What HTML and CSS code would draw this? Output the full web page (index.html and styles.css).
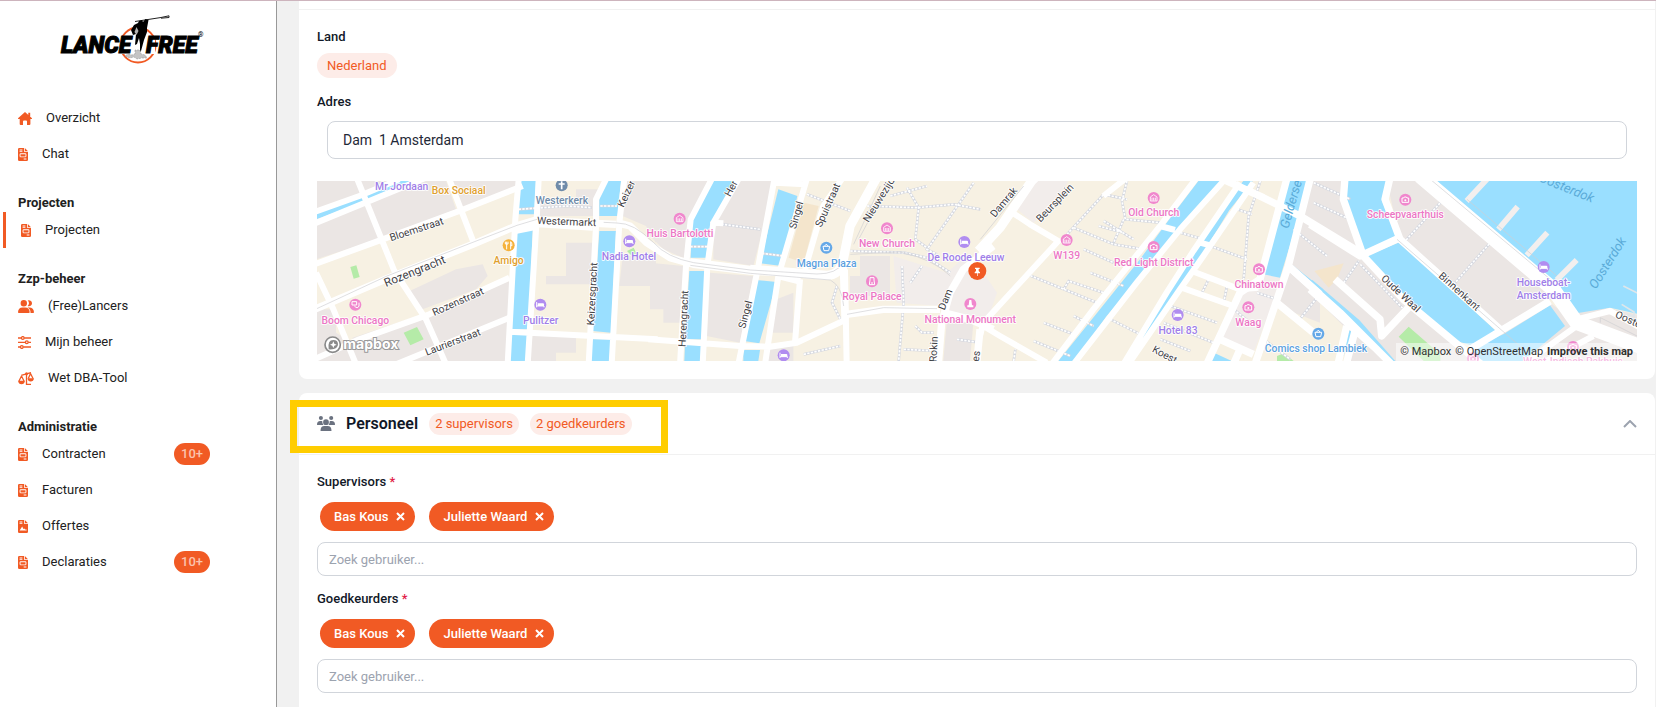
FILE: index.html
```html
<!DOCTYPE html>
<html lang="nl">
<head>
<meta charset="utf-8">
<meta name="viewport" content="width=device-width, initial-scale=1">
<title>Lance Free - Projecten</title>
<link rel="stylesheet" href="styles.css">
</head>
<body>
<svg class="defs" aria-hidden="true">
  <symbol id="doc" viewBox="0 0 10 13"><path fill="currentColor" fill-rule="evenodd" d="M1.300 0H6v3.200q0 .8.800.8H10v7.700q0 1.300-1.300 1.300H1.300Q0 13 0 11.700V1.300Q0 0 1.300 0ZM6.800 0 10 3.200H6.800ZM1.600 1.600v.8h2.800v-.8ZM1.600 3.300v.8h2.800v-.8ZM2.800 5.300q-1.200 0-1.200 1.200v1.600q0 1.200 1.200 1.200h4.400q1.200 0 1.200-1.200V6.500q0-1.200-1.200-1.200ZM2.500 6.200h5v2.200h-5ZM5.700 10.600v.8h2.700v-.8Z"/></symbol>
  <symbol id="sign" viewBox="0 0 10 13"><path fill="currentColor" fill-rule="evenodd" d="M1.300 0H6v3.200q0 .8.800.8H10v7.700q0 1.300-1.300 1.300H1.300Q0 13 0 11.700V1.300Q0 0 1.300 0ZM6.800 0 10 3.200H6.800ZM1.600 1.600v.8h2.800v-.8ZM1.600 3.300v.8h2.800v-.8ZM1.600 10.600 4.200 6.500l1.200 2.600 1-.6.700 1h1.500v1.100Z"/></symbol>
  <symbol id="home" viewBox="0 0 14 13"><path fill="currentColor" d="M7 0 14 6.200q.1.900-.7.900h-.9V12q0 1-1 1H9V9.400q0-1-1-1H6q-1 0-1 1V13H2.700q-1 0-1-1V7.100H.7Q-.1 7.100 0 6.200L5.900.9ZM10.300.8h1.900V5l-1.900-1.600Z"/></symbol>
  <symbol id="users" viewBox="0 0 16 13"><path fill="currentColor" d="M5.800 0a3.200 3.200 0 1 1 0 6.400 3.200 3.200 0 0 1 0-6.400ZM9.700 5.900a3.900 3.900 0 0 0 0-5.400 3 3 0 1 1 0 5.400ZM0 12.200Q.2 7.500 4.600 7.500h2.600q4.300 0 4.500 4.700 0 .8-.8.800H.8Q0 13 0 12.200ZM9.400 7.500h1.700q4.700.1 4.900 4.700 0 .8-.8.800h-2.700Q12.800 9 9.400 7.500Z"/></symbol>
  <symbol id="sliders" viewBox="0 0 13 13"><g fill="none" stroke="currentColor" stroke-width="1.300"><path d="M0 2h3.300M6.300 2H13M0 6.300h7.300M10.300 6.300H13M0 11h2.300M5.300 11H13"/><circle cx="4.800" cy="2" r="1.400"/><circle cx="8.800" cy="6.300" r="1.400"/><circle cx="3.800" cy="11" r="1.400"/></g></symbol>
  <symbol id="scales" viewBox="0 0 16 13"><path fill="none" stroke="currentColor" stroke-width="1.300" d="M3.200 3.400 8.500 1.800 13 .6M8.500 1.800V12.300H13M3.500 4 1 9M3.500 4 6 9M12.500 1.500 10.300 6.500M12.500 1.500 15 6.500"/><circle cx="8.500" cy="1.700" r="1.500" fill="currentColor"/><path fill="currentColor" d="M0 8.700h7Q6.400 12.200 3.500 12.200T0 8.700ZM9.500 6.200H16q-.5 3.200-3.300 3.200T9.500 6.200Z"/></symbol>
  <symbol id="team" viewBox="0 0 18 15"><path fill="currentColor" d="M3.900 0a2 2 0 1 1 0 4.100 2 2 0 0 1 0-4.100ZM14.200 0a2 2 0 1 1 0 4.100 2 2 0 0 1 0-4.100ZM9 3.300a2.900 2.900 0 1 1 0 5.800 2.900 2.900 0 0 1 0-5.800ZM0 8.700Q0 5 3.200 5h1.500l.6.200q-.2 2.300 1.100 3.700H.2ZM18 8.700Q18 5 14.800 5h-1.500l-.6.200q.2 2.300-1.100 3.700h6.200ZM3.500 14.400Q3.700 10 7.300 10h3.400q3.600 0 3.800 4.400 0 .6-.6.600H4.100q-.6 0-.6-.6Z"/></symbol>
  <symbol id="poi-bed" viewBox="-20 -20 40 40"><circle r="18" fill="#b18df0"/><path fill="none" stroke="#fff" stroke-width="3" d="M-11-8V8M-11 4H11V8"/><path fill="#fff" d="M-8-4H8q3 0 3 3V4H-8Z"/></symbol>
  <symbol id="poi-camera" viewBox="-20 -20 40 40"><circle r="18" fill="#f087cd"/><path fill="none" stroke="#fff" stroke-width="3" d="M-10-5h5l2-3h6l2 3h5V8h-20Z"/><circle cy="2" r="3" fill="#fff"/></symbol>
  <symbol id="poi-museum" viewBox="-20 -20 40 40"><circle r="18" fill="#f087cd"/><path fill="none" stroke="#fff" stroke-width="2.500" d="M-10-3 0-10 10-3V9h-20ZM-5-1V8M0-1V8M5-1V8"/></symbol>
  <symbol id="poi-shop" viewBox="-20 -20 40 40"><circle r="18" fill="#64a8e8"/><path fill="none" stroke="#fff" stroke-width="3" d="M-10-4h20L7 9H-7ZM-5-5l3-4h4l3 4"/></symbol>
</svg>

<div class="app">
  <aside class="sidebar">
    <a class="logo" href="#" aria-label="Lance Free">
      <svg viewBox="0 0 144 52" width="144" height="52">
        <circle cx="77" cy="32" r="17.500" fill="none" stroke="#f15a24" stroke-width="2"/>
        <path fill="#fff" d="M50 23H94V41H50Z"/>
        <text class="logo-text" x="0" y="40">LANCE</text>
        <text class="logo-text" x="85" y="40">FREE</text>
        <text class="logo-mark" x="137" y="24">®</text>
        <path d="M74 8.500 100 4.500M100 4.500l8-1.700v1.700l-8 .7" fill="none" stroke="#222" stroke-width="1"/>
        <path d="M87.500 7 86 15l0 4-3 8-3 11-1 1 0-8-1-6-2 6-2 1 1-11-3 1-2-5 3-5 4-2 1-2 3-1 1 2 2.500-3Z"/>
        <path d="M75.500 14l-2 5 2 3 2-4Z" fill="#fff" opacity=".7"/>
        <path d="M74 37v4l-3 1-4-1-3 2 5 2 4-1 3 2 5-1 5 0-2-3-4-1-1-4Z" fill="#c4c4c4" stroke="#8e8e8e" stroke-width=".5" stroke-dasharray="2 1"/>
      </svg>
    </a>
    <nav class="nav">
      <a class="item" href="#"><svg class="w14"><use href="#home"/></svg>Overzicht</a>
      <a class="item" href="#"><svg class="w10"><use href="#doc"/></svg>Chat</a>
      <h2 class="heading">Projecten</h2>
      <a class="item active" href="#"><svg class="w10"><use href="#doc"/></svg>Projecten</a>
      <h2 class="heading">Zzp-beheer</h2>
      <a class="item" href="#"><svg class="w16"><use href="#users"/></svg>(Free)Lancers</a>
      <a class="item" href="#"><svg class="w13"><use href="#sliders"/></svg>Mijn beheer</a>
      <a class="item" href="#"><svg class="w16"><use href="#scales"/></svg>Wet DBA-Tool</a>
      <h2 class="heading">Administratie</h2>
      <a class="item" href="#"><svg class="w10"><use href="#doc"/></svg>Contracten<span class="count">10+</span></a>
      <a class="item" href="#"><svg class="w10"><use href="#doc"/></svg>Facturen</a>
      <a class="item" href="#"><svg class="w10"><use href="#sign"/></svg>Offertes</a>
      <a class="item" href="#"><svg class="w10"><use href="#doc"/></svg>Declaraties<span class="count">10+</span></a>
    </nav>
  </aside>

  <main class="main">
    <section class="card location">
      <div class="location-body">
        <h3 class="label">Land</h3>
        <span class="pill country">Nederland</span>
        <label class="label" for="adres">Adres</label>
        <div class="address"><input id="adres" class="input" type="text" value="Dam  1 Amsterdam"></div>
        <div class="map">
          <svg class="map-canvas" viewBox="0 15 3960 540" preserveAspectRatio="xMidYMid slice" role="img" aria-label="Kaart van Amsterdam">
            <rect y="15" width="3960" height="540" fill="#f7f1e3"/>
            <g class="land">
              <g transform="translate(-3)"><path d="M0 15H600V30L440 95 410 15H390L420 100 200 185 0 250ZM110 485 320 415 580 315V555H110ZM270 350 420 280 500 265 515 300 480 340 320 400ZM0 400H60V470L110 500V555H0ZM750 200H830V325H690V300H750ZM650 470H780V530H720V555H640ZM920 240H1020V330H910ZM930 15H1020V200L990 150 920 120ZM670 75H780V40H850V120H670Z"/></g>
              <g transform="translate(999)"><path d="M0 15H180L120 130 110 250 40 220 0 180ZM0 260 100 270V440H40V400H0ZM250 15H375L310 270 190 250V140ZM180 290 310 300 270 500 170 480ZM380 370 430 350V470H350ZM350 510H430V555H350ZM630 240H720V360H600V300H630Z"/></g>
              <g transform="translate(2979)"><path d="M0 15H110L160 240 290 390 440 500 490 555H110V460L0 350ZM230 15H330L740 360 565 465 270 190ZM570 465 720 380 800 440 900 480 1000 500V555H540ZM800 410 890 395 1000 420V500L830 450Z"/></g>
              <path d="M2974 15H3009V440L2879 390 2909 270 2949 130ZM1889 440H1969L1959 555H1879Z"/>
            </g>
            <path fill="#f2edeb" d="M1729 240 1889 290 1959 230 2040 350 2009 440H1889L1869 390 1739 380ZM2139 15H2254L2209 90 2149 140 2089 90ZM2769 345 2839 290 2889 305 2869 380 2809 530 2709 490Z"/>
            <path fill="#f4e5cc" d="M1460 80 1505 90 1460 260 1415 245ZM2992 285 3080 262 3060 310 3035 335Z"/>
            <path fill="#b5eba8" d="M100 273 118 268 128 303 110 308ZM260 470 300 453 320 490 280 508ZM930 225 950 215 962 240 945 240ZM3245 482 3275 452 3370 535V555H3320ZM2880 540 2900 532 2930 555H2880Z"/>
            <g class="water">
              <g transform="translate(-3)"><path d="M0 105 140 50 240 15H295L150 75 0 130ZM610 15H660L655 115H608ZM602 165 650 160 638 460H586ZM583 475H636L630 555H582ZM862 15H915L905 120H850V60ZM850 165H900L885 470 830 465ZM828 490H885L880 555H825Z"/></g>
              <g transform="translate(999)"><path d="M190 15H262L182 140 168 245H122L125 130ZM118 285H168L158 490H105ZM105 505H155L152 555H103ZM385 40 442 60 395 270 330 262ZM318 312 380 318 328 502 282 495ZM280 522H330L325 555H280Z"/></g>
              <g transform="translate(1989)"><path d="M655 15H725L600 160 500 280 380 420 285 555H235L360 400 480 250 560 140ZM920 15H988L960 110 900 305 850 295 890 110 905 70ZM930 262 1030 340V365L925 285ZM705 532 755 555H690Z"/><path class="narrow" d="M812 5 740 95 660 225 580 345 490 475 435 565"/></g>
              <g transform="translate(2979)"><path d="M105 15H228L218 80 265 180 165 235 100 70ZM170 240 270 198 558 465 490 510 440 495 290 370ZM375 10H990V415L900 395 800 412 740 345ZM580 475 720 388 765 450 650 545 630 560H470L500 510ZM110 460 128 468 100 540 85 530Z"/><path class="narrow" d="M0 320 140 440 250 565"/></g>
            </g>
            <g transform="translate(2979)">
              <path id="piers" class="piers" d="M470 75 535 5M565 160 623 92M650 238 712 170M740 312 800 252"/>
              <use class="pier-tops" href="#piers"/>
              <path class="jetty" d="M940 330 1000 360M935 385 972 408V422L950 415"/>
            </g>
            <g class="walks">
              <path id="walks" d="M605 100 750 90 825 95M850 90H900M1180 140 1330 160M1120 212H1175M1335 232 1400 240M1470 55 1600 105M1650 90 1800 95 1910 85 1990 100M1770 35 1805 95 1795 190 1830 215M1970 20 1830 220 1860 235M1720 60 1830 30M1600 225 1760 230 1830 245 1900 290M1755 270 1760 380 1745 555M1815 270 1780 320M1560 330 1545 380 1575 440M1590 410 1740 395 1860 400M1760 520 1860 525M1795 450 1815 470 1850 470M1460 535 1570 510M1920 490 1990 500M2250 175 2360 55 2430 70M2430 15 2415 75 2425 130 2530 140M2270 155 2390 205 2480 220M2420 130 2390 200M2345 150 2420 170M2360 135 2450 190M2300 220 2390 260M2130 295 2340 380M2240 340 2255 315 2360 350M2320 290 2420 330M2180 440 2270 475M2150 495 2260 540M2270 420 2330 450M2090 555 2095 520M2370 425 2470 475M2590 170 2660 190M2680 210 2790 250M2760 100 2805 115M2830 15 2795 120 2780 310M2680 300 2655 350M2730 330 2720 380M2560 390 2700 440M2540 440 2690 500M2530 490 2620 525M2750 400 2800 440M2820 350 2880 370M2840 490 2920 550M2930 160 3030 240M2950 120 3050 180M2990 20 3100 70M2990 80 3110 135M2940 440 3000 365M3080 320 3125 255M3130 265 3260 400M3260 200 3370 80M3410 325 3520 200"/>
              <use class="dots" href="#walks"/>
            </g>
            <g class="roads">
              <g transform="translate(-3)">
                <path class="md" d="M-10 110 130 60 250 10M-10 145 160 75 330 5M-5 265 200 190 430 105 620 30M120 0 235 285 330 430 390 565M400 10 475 205M0 290 50 395 120 565M-5 550 130 490 340 415 580 305M240 565 580 425"/>
                <path class="lg" d="M-5 400 220 305 470 205 600 150 660 132 840 142 900 145M590 165 665 150"/>
                <path class="md" d="M608 10 598 130 575 565M668 10 662 130 635 565M870 10 840 70 840 150 818 565M925 10 910 140 887 565M580 467 1025 490M665 145 830 155"/>
              </g>
              <g transform="translate(999)">
                <path class="md" d="M190 0 122 130 108 270 90 565M265 10 190 140 172 270 158 565M375 0 325 270 265 565M375 20 465 25M470 10 385 300 345 565M575 10 520 90 465 280M-5 490 270 510 360 512 440 500 590 430M450 310 435 500M585 280 590 565M190 140 220 142"/>
                <path class="lg" d="M-100 140 -60 150 -10 200 60 245 130 265 300 285 480 295M120 258 310 282M390 300 450 315"/>
                <path class="xl" d="M300 280 530 298Q570 298 580 250L600 150 680 5"/>
                <path class="lg" d="M580 270 585 430M1030 210 940 280 900 350 875 440 865 565M880 410 960 430 1030 460M990 460 980 565M590 415 700 400 870 400"/>
              </g>
              <g transform="translate(1989)">
                <path class="xl" d="M-5 225 60 155 155 15 165 5"/>
                <path class="md" d="M90 105 150 145 235 195 10 440 0 480M10 450 60 480 200 560M440 5 370 60M650 5 540 150 340 400 215 565M735 10 600 160 470 320 280 565M540 150 585 162M780 20 640 225 560 350 430 565M820 20 670 240 600 340 445 565M660 200 690 208M635 285 780 340 835 335M605 335 760 390"/>
                <path class="lg" d="M730 10 850 65 960 120 1150 235M920 10 840 310 780 350 680 565M990 10 925 270 825 565M925 270 1020 355M720 490 820 535M890 380 1000 470M780 520 760 565"/>
              </g>
              <g transform="translate(2979)">
                <path class="lg" d="M105 5 100 70 160 240 280 370 520 570M240 5 225 70 270 190 570 460M0 145 150 240 270 185M480 520 720 375M-60 275 90 410 245 565M0 340 200 520 245 565M75 310 210 430 215 480 300 390M110 450 85 560M135 465 110 560"/>
                <path class="xxl" d="M330 0 730 340 800 440 1000 515"/>
                <path class="md" d="M800 430 900 405 1000 460M800 450 640 565M690 565 850 480"/>
              </g>
            </g>
            <g class="tram"><path d="M-5 400 210 300 470 198 600 148 660 130M860 139 900 141Q950 140 1010 200 1050 245 1130 260L1300 282 1500 294Q1560 294 1578 260M1120 268 1300 292 1540 312Q1575 330 1580 390M1600 235 1750 228Q1850 250 1900 300M1610 205 1690 30M1625 190 1700 50M1590 415 1700 395 1860 398M1990 190 2120 30M3340 10 3700 310M3450 70 3720 300M3240 190 3620 520M3850 440V425L3980 490"/></g>

            <g class="streets">
              <text transform="translate(299 162) rotate(-18)">Bloemstraat</text>
              <text class="big" transform="translate(294 288) rotate(-22)">Rozengracht</text>
              <text transform="translate(424 379) rotate(-24)">Rozenstraat</text>
              <text transform="translate(408 500) rotate(-21)">Laurierstraat</text>
              <text transform="translate(749 139) rotate(2)">Westermarkt</text>
              <text transform="translate(930 54) rotate(-65)">Keizer</text>
              <text transform="translate(828 354) rotate(-87)">Keizersgracht</text>
              <text transform="translate(1244 38) rotate(-62)">Her</text>
              <text transform="translate(1102 428) rotate(-87)">Herengracht</text>
              <text transform="translate(1440 118) rotate(-74)">Singel</text>
              <text transform="translate(1287 416) rotate(-75)">Singel</text>
              <text transform="translate(1534 88) rotate(-66)">Spuistraat</text>
              <text transform="translate(1692 66) rotate(-58)">Nieuwezijds</text>
              <text transform="translate(1887 371) rotate(-68)">Dam</text>
              <text transform="translate(1852 520) rotate(-87)">Rokin</text>
              <text transform="translate(1979 541) rotate(-83)">es</text>
              <text transform="translate(2062 80) rotate(-50)">Damrak</text>
              <text transform="translate(2215 82) rotate(-46)">Beursplein</text>
              <text transform="translate(2542 538) rotate(28)">Koest</text>
              <text transform="translate(3250 354) rotate(43)">Oude Waal</text>
              <text transform="translate(3426 348) rotate(42)">Binnenkant</text>
              <text transform="translate(3938 434) rotate(24)">Ooster</text>
              <g class="sea">
                <text transform="translate(2930 66) rotate(-74)">Gelderseka</text>
                <text transform="translate(3748 38) rotate(22)">Oosterdok</text>
                <text transform="translate(3874 262) rotate(-58)">Oosterdok</text>
              </g>
            </g>
            <g class="places">
              <g class="violet"><text x="254" y="42">Mr Jordaan</text><text x="671" y="443">Pulitzer</text><text x="936" y="252">Nadia Hotel</text><text x="1947" y="254">De Roode Leeuw</text><text x="2583" y="473">Hotel 83</text><text x="3680" y="329">Houseboat-</text><text x="3680" y="368">Amsterdam</text></g>
              <g class="amber"><text x="425" y="53">Box Sociaal</text><text x="575" y="265">Amigo</text></g>
              <g class="pink"><text x="115" y="443">Boom Chicago</text><text x="1089" y="183">Huis Bartolotti</text><text x="1710" y="213">New Church</text><text x="1665" y="372">Royal Palace</text><text x="1960" y="440">National Monument</text><text x="2510" y="121">Old Church</text><text x="2249" y="248">W139</text><text x="2510" y="269">Red Light District</text><text x="2826" y="335">Chinatown</text><text x="2794" y="450">Waag</text><text x="3265" y="127">Scheepvaarthuis</text><text x="3768" y="567">West-Indisch Pakhuis</text></g>
              <g class="slate"><text x="735" y="84">Westerkerk</text></g>
              <g class="blue"><text x="1529" y="272">Magna Plaza</text><text x="2997" y="529">Comics shop Lambiek</text></g>
            </g>
            <g class="pois">
              <use href="#poi-bed" x="650" y="366" width="40" height="40"/><use href="#poi-bed" x="917" y="176" width="40" height="40"/><use href="#poi-bed" x="1380" y="518" width="40" height="40"/><use href="#poi-bed" x="1922" y="178" width="40" height="40"/><use href="#poi-bed" x="2562" y="397" width="40" height="40"/><use href="#poi-bed" x="3660" y="253" width="40" height="40"/>
              <use href="#poi-museum" x="1068" y="108" width="40" height="40"/><use href="#poi-museum" x="1690" y="137" width="40" height="40"/><use href="#poi-museum" x="2490" y="46" width="40" height="40"/><use href="#poi-museum" x="2229" y="172" width="40" height="40"/>
              <use href="#poi-camera" x="2490" y="193" width="40" height="40"/><use href="#poi-camera" x="2806" y="260" width="40" height="40"/><use href="#poi-camera" x="2774" y="374" width="40" height="40"/><use href="#poi-camera" x="3245" y="51" width="40" height="40"/><use href="#poi-camera" x="3748" y="493" width="40" height="40"/><use href="#poi-camera" x="3448" y="527" width="40" height="40"/>
              <use href="#poi-shop" x="1508" y="195" width="40" height="40"/><use href="#poi-shop" x="2984" y="453" width="40" height="40"/>
              <circle cx="115" cy="386" r="18" fill="#f087cd"/><path d="M105 377h14v10h-14ZM112 390q10 10 14 0V380" fill="none" stroke="#fff" stroke-width="3"/>
              <circle cx="1665" cy="316" r="18" fill="#f087cd"/><path d="M1657 326 1659 312V305H1671V312L1673 326ZM1665 326V318" fill="none" stroke="#fff" stroke-width="3"/>
              <circle cx="1960" cy="384" r="18" fill="#f087cd"/><path d="M1957 372h6l2 16h4v6h-18v-6h4Z" fill="#fff"/>
              <circle cx="575" cy="208" r="18" fill="#f5b23b"/><path d="M569 197V220M565 197v7h8v-7M581 220V197q4 3 4 12h-4" fill="none" stroke="#fff" stroke-width="3"/>
              <circle cx="734" cy="28" r="18" fill="#6f8ba9"/><path d="M734 16V40M725 24h18" stroke="#fff" stroke-width="5"/>
              <circle cx="1981" cy="285" r="27" fill="#f15a24"/><path d="M1974 275h14v4h-3v6l4 4v3h-7v8h-2v-8h-7v-3l4-4v-6h-3Z" fill="#fff"/>
            </g>
            <g class="brand"><circle cx="47" cy="506" r="23" fill="#fff" stroke="#8a8a8a" stroke-width="5"/><path d="M35 520q-4-28 14-28 14 0 14 13 0 17-28 15Z" fill="#8a8a8a"/><path d="m49 496 3 7 7 3-7 3-3 7-3-7-7-3 7-3Z" fill="#fff"/><text x="79" y="519">mapbox</text></g>
          </svg>
          <div class="credits"><a href="#">© Mapbox</a><a href="#">© OpenStreetMap</a><a class="improve" href="#">Improve this map</a></div>
        </div>
      </div>
    </section>

    <section class="card staff">
      <header class="staff-head">
        <svg class="team" width="18" height="15"><use href="#team"/></svg>
        <h2 class="title">Personeel</h2>
        <span class="pill">2 supervisors</span>
        <span class="pill">2 goedkeurders</span>
        <button class="toggle" type="button" aria-label="Inklappen"><svg width="14" height="8" viewBox="0 0 14 8"><path d="M1 7 7 1l6 6" fill="none" stroke="#9ca3af" stroke-width="2"/></svg></button>
        <div class="highlight"></div>
      </header>
      <div class="staff-body">
        <div class="field">
          <label class="label" for="sup">Supervisors <span class="req">*</span></label>
          <div class="tags">
            <span class="tag">Bas Kous<button type="button" aria-label="Verwijder Bas Kous"><svg viewBox="0 0 9 9"><path d="M1 1 8 8M8 1 1 8"/></svg></button></span>
            <span class="tag">Juliette Waard<button type="button" aria-label="Verwijder Juliette Waard"><svg viewBox="0 0 9 9"><path d="M1 1 8 8M8 1 1 8"/></svg></button></span>
          </div>
          <input id="sup" class="input search" type="text" placeholder="Zoek gebruiker...">
        </div>
        <div class="field">
          <label class="label" for="goed">Goedkeurders <span class="req">*</span></label>
          <div class="tags">
            <span class="tag">Bas Kous<button type="button" aria-label="Verwijder Bas Kous"><svg viewBox="0 0 9 9"><path d="M1 1 8 8M8 1 1 8"/></svg></button></span>
            <span class="tag">Juliette Waard<button type="button" aria-label="Verwijder Juliette Waard"><svg viewBox="0 0 9 9"><path d="M1 1 8 8M8 1 1 8"/></svg></button></span>
          </div>
          <input id="goed" class="input search" type="text" placeholder="Zoek gebruiker...">
        </div>
      </div>
    </section>
  </main>
</div>
</body>
</html>
```
FILE: styles.css
```css
* { box-sizing: border-box; }
body {
  margin: 0;
  background: #f1f1f1;
  border-top: 1px solid #cdb4bd;
  color: #111827;
  font: 13px/18px Roboto, "Liberation Sans", sans-serif;
}
h2, h3 { margin: 0; }
a { color: inherit; text-decoration: none; }
.defs { position: absolute; width: 0; height: 0; }
.app { display: flex; min-height: calc(100vh - 1px); }

.sidebar {
  flex: none;
  width: 277px;
  background: #fff;
  border-right: 1px solid #999;
  color: #212121;
}
.logo { display: block; height: 99px; padding: 12px 0 0 61px; }
.logo svg { display: block; overflow: visible; }
.logo-text { font-size: 23px; font-style: italic; font-weight: 900; fill: #000; stroke: #000; stroke-width: 1; }
.logo-mark { font-size: 7px; }
.item {
  display: flex;
  align-items: center;
  gap: 14px;
  height: 36px;
  padding-left: 18px;
}
.item svg { height: 13px; color: #f15a24; }
.w10 { width: 10px; }
.w13 { width: 13px; }
.w14 { width: 14px; }
.w16 { width: 16px; }
.active { margin-left: 3px; padding-left: 15px; border-left: 3px solid #f15a24; }
.heading { margin-top: 22px; padding-left: 18px; font-size: 13px; line-height: 18px; font-weight: 700; }
.count {
  margin: 0 66px 0 auto;
  width: 36px;
  border-radius: 11px;
  background: #f15a24;
  color: #fbc3ad;
  font-weight: 500;
  line-height: 22px;
  text-align: center;
}

.main {
  flex: 1;
  min-width: 0;
  display: flex;
  flex-direction: column;
  gap: 14px;
  padding: 0 1px 0 22px;
}
.card { background: #fff; border-radius: 8px; }
.location { padding-top: 8px; border-radius: 0 0 8px 8px; }
.location-body { padding: 18px; border-top: 1px solid #f1f1f1; }
.label { display: block; font-size: 13px; line-height: 18px; font-weight: 500; }
.pill {
  border-radius: 13px;
  padding: 0 6px;
  background: #fdece8;
  color: #f15a24;
  line-height: 22px;
}
.country { display: table; margin: 7px 0 15px; padding: 0 10px; line-height: 25px; }
.address { padding: 10px 10px 22px; }
.input {
  display: block;
  width: 100%;
  height: 38px;
  padding: 0 15px;
  border: 1px solid #d1d5db;
  border-radius: 8px;
  background: #fff;
  color: #1f2937;
  font: 14px/18px Roboto, "Liberation Sans", sans-serif;
}
.search { height: 34px; padding: 0 11px; font-size: 13px; }
.search::placeholder { color: #9ca3af; opacity: 1; }

.map { position: relative; height: 180px; overflow: hidden; }
.map-canvas { display: block; width: 100%; height: 100%; }
.land { fill: #ebe6e4; }
.water { fill: #9adfff; }
.narrow { fill: none; stroke: #9adfff; stroke-width: 22; }
.piers { fill: none; stroke-width: 17; }
#piers { stroke: inherit; }
g > .piers { stroke: #dcdbe2; }
.pier-tops { stroke: #f3efee; }
.jetty { fill: none; stroke: #dfe6ea; stroke-width: 5; }
.walks { fill: none; stroke: #d4d7df; stroke-width: 8; }
.dots { stroke: #fff; stroke-width: 5; stroke-dasharray: 7 4; }
.roads { fill: none; stroke: #fff; stroke-linejoin: round; }
.md { stroke-width: 18; }
.lg { stroke-width: 22; }
.xl { stroke-width: 28; }
.xxl { stroke-width: 44; }
.tram { fill: none; stroke: #cfcfd2; stroke-width: 2; }
.streets, .places { font-size: 31px; text-anchor: middle; paint-order: stroke; stroke: #fff; stroke-width: 5; stroke-linejoin: round; }
.streets { fill: #3f4145; dominant-baseline: middle; }
.big { font-size: 35px; }
.sea { fill: #5aabd8; stroke: none; font-size: 39px; font-style: italic; }
.places { font-weight: 500; }
.violet { fill: #a07ee8; }
.amber { fill: #dfa02e; }
.pink { fill: #ec76c4; }
.slate { fill: #6f8ba9; }
.blue { fill: #5b9fe0; }
.brand text { font: 700 42px Inter, sans-serif; fill: #fff; stroke: #999; stroke-width: 6; paint-order: stroke; }
.credits {
  position: absolute;
  right: 0;
  bottom: 0;
  display: flex;
  gap: 4px;
  padding: 0 4px;
  background: rgba(255, 255, 255, .5);
  color: #303030;
  font-size: 11px;
  white-space: nowrap;
}
.improve { font-weight: 700; }

.staff { flex: 1; border-radius: 8px 8px 0 0; }
.staff-head {
  position: relative;
  display: flex;
  align-items: center;
  gap: 11px;
  height: 62px;
  padding: 0 18px;
  border-bottom: 1px solid #f1f1f1;
}
.team { color: #6b7280; }
.title { font-size: 16px; line-height: 24px; font-weight: 600; }
.toggle { margin-left: auto; padding: 0; border: 0; background: none; line-height: 0; }
.highlight {
  position: absolute;
  left: -9px;
  top: 7px;
  width: 378px;
  height: 53px;
  border: 7px solid #ffcd00;
  pointer-events: none;
}
.staff-body { display: grid; gap: 14px; padding: 18px 18px 14px; }
.req { color: #e11d48; }
.tags { display: flex; gap: 14px; padding: 11px 3px; }
.tag {
  display: flex;
  align-items: center;
  gap: 8px;
  height: 29px;
  padding: 0 10px 0 14px;
  border-radius: 15px;
  background: #f15a24;
  color: #fff;
  font-weight: 500;
}
.tag button { width: 9px; height: 9px; padding: 0; border: 0; background: none; }
.tag svg { display: block; fill: none; stroke: #fff; stroke-width: 2; }
```
